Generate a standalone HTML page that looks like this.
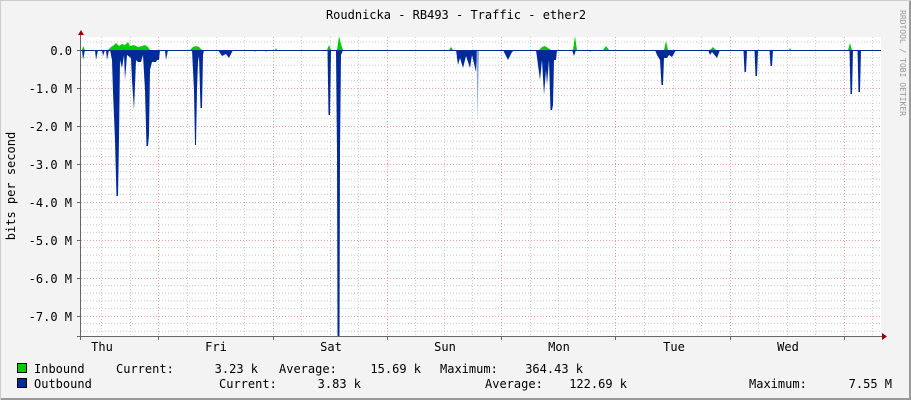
<!DOCTYPE html>
<html><head><meta charset="utf-8"><style>
html,body{margin:0;padding:0;background:#f3f3f3;}
svg{display:block;}
text{font-family:"DejaVu Sans Mono","Liberation Mono",monospace;font-size:12px;fill:#000;}
</style></head><body>
<svg width="911" height="400" xmlns="http://www.w3.org/2000/svg">
<rect x="0" y="0" width="911" height="400" fill="#f3f3f3"/>
<rect x="909" y="0" width="2" height="400" fill="#999"/>
<rect x="0" y="398" width="911" height="2" fill="#999"/>
<rect x="0" y="0" width="911" height="1" fill="#ccc"/>
<rect x="0" y="0" width="1" height="400" fill="#ccc"/>
<rect x="81" y="37" width="800" height="299" fill="#fff"/>
<g stroke="#ccc" stroke-width="1" stroke-dasharray="1,2">
<path d="M81 57.6H881M81 65.2H881M81 72.8H881M81 80.4H881
M81 95.6H881M81 103.2H881M81 110.8H881M81 118.4H881
M81 133.6H881M81 141.2H881M81 148.8H881M81 156.4H881
M81 171.6H881M81 179.2H881M81 186.8H881M81 194.4H881
M81 209.6H881M81 217.2H881M81 224.8H881M81 232.4H881
M81 247.6H881M81 255.2H881M81 262.8H881M81 270.4H881
M81 285.6H881M81 293.2H881M81 300.8H881M81 308.4H881
M81 323.6H881M81 331.2H881M81 42H881"/>
<path d="M101.5 37V336M130.5 37V336M187.5 37V336M216.5 37V336M244.5 37V336M301.5 37V336M330.5 37V336M358.5 37V336M415.5 37V336M444.5 37V336M472.5 37V336M530.5 37V336M558.5 37V336M587.5 37V336M644.5 37V336M673.5 37V336M701.5 37V336M758.5 37V336M787.5 37V336M815.5 37V336M872.5 37V336"/>
</g>
<g stroke="#e9a0a0" stroke-width="1" stroke-dasharray="1,2">
<path d="M81 88.5H881M81 126.5H881M81 164.5H881M81 202.5H881M81 240.5H881M81 278.5H881M81 316.5H881"/>
<path d="M158.5 37V336M273.5 37V336M387.5 37V336M501.5 37V336M615.5 37V336M730.5 37V336M844.5 37V336"/>
</g>
<g fill="#00cc00">
<path d="M82 50L83 46L85 50ZM108 50L111 47L114 45L116 43L119 46L122 44L125 45L128 42L130 46L134 45L138 47L142 46L145 45L148 47L150 50Z"/>
<path d="M190 50L193 47L196 46L199 47L202 50ZM275 50L276 48L277 50Z"/>
<path d="M327 50L329 45L331 50ZM337 50L339 36L341 44L343 50Z"/>
<path d="M449 50L451 47L453 50ZM539 50L542 47L545 46L548 48L551 50ZM573 50L575 36L577 50ZM603 50L606 46L609 50Z"/>
<path d="M664 50L666 41L668 50ZM710 50L713 47L716 50ZM789 50L790 48L791 50ZM848 50L850 43L852 50Z"/>
</g>
<g fill="#002a97">
<path d="M82 50L83 60L85 50ZM95 50L96 60L98 50ZM102 50L103 56L105 50ZM106 50L107 60L109 50Z
M110 50L112 60L113 92L115 140L116.5 196L118 196L119 140L120 60L122 68L124 55L125 80L127 55L131 58L132 80L134 110L136 60L138 62L141 62L143 55L145 90L146.5 146L148 146L149 135L150 70L152 62L156 62L157 60L159 60L160 50Z
M165 50L166 60L168 50ZM192 50L194 90L195 145L196 145L197 90L198 62L199 56L200.5 108L202 108L203 55L204 50ZM218 50L222 56L226 54L229 58L233 50Z"/>
<path d="M254 50L255 52L256 50ZM265 50L266 52L267 50ZM327.5 50L328.5 115L330 115L331 50ZM336 50L337 150L337.5 336L339.5 336L340 150L341 55L343 50Z"/>
<path d="M456 50L458 65L460 58L463 68L466 56L470 68L472 55L476 72L477 50Z"/>
<path d="M503 50L508 60L512 52L515 50ZM536 50L540 80L542 60L544 95L546 70L547 85L549 60L550.5 110L552 110L553 105L554 60L556 60L557 50ZM572 50L574 56L576 50ZM589 50L590 52L591 50Z"/>
<path d="M655 50L657 55L660 60L661.5 85L663 85L664 58L667 58L669 55L672 57L676 50ZM708 50L710 55L712 52L717 58L720 50ZM743.5 50L744.5 72L746 72L747 50ZM754.5 50L755.5 76L757 76L758 50ZM769.5 50L770.5 66L772 66L773 50ZM790 50L791 51L792 50ZM849.5 50L850.5 94L852 94L853 50ZM857.5 50L858.5 92L860 92L861 50Z"/>
</g>
<path d="M476.5 50L477.5 122L479 50Z" fill="#8fa6dc"/>
<line x1="81" y1="50.5" x2="881" y2="50.5" stroke="#002a97" stroke-width="1"/>
<line x1="80.5" y1="34" x2="80.5" y2="340" stroke="#666"/>
<line x1="77" y1="336.5" x2="884" y2="336.5" stroke="#666"/>
<path d="M78 35L81 30L84 35Z" fill="#900"/>
<path d="M882 333L887 336.5L882 340Z" fill="#900"/>
<g stroke="#666"><path d="M77 50.5H81M77 88.5H81M77 126.5H81M77 164.5H81M77 202.5H81M77 240.5H81M77 278.5H81M77 316.5H81"/>
<path d="M158.5 336V340M273.5 336V340M387.5 336V340M501.5 336V340M615.5 336V340M730.5 336V340M844.5 336V340"/></g>
<text x="456" y="19" text-anchor="middle">Roudnicka - RB493 - Traffic - ether2</text>
<g text-anchor="end">
<text x="72" y="55">0.0</text>
<text x="72" y="93">-1.0 M</text>
<text x="72" y="131">-2.0 M</text>
<text x="72" y="169">-3.0 M</text>
<text x="72" y="207">-4.0 M</text>
<text x="72" y="245">-5.0 M</text>
<text x="72" y="283">-6.0 M</text>
<text x="72" y="321">-7.0 M</text>
</g>
<text transform="translate(15,186) rotate(-90)" text-anchor="middle">bits per second</text>
<text transform="translate(900,10) rotate(90)" style="font-size:8px;fill:#999">RRDTOOL / TOBI OETIKER</text>
<g text-anchor="middle">
<text x="102" y="351">Thu</text><text x="216" y="351">Fri</text><text x="331" y="351">Sat</text>
<text x="445" y="351">Sun</text><text x="559" y="351">Mon</text><text x="674" y="351">Tue</text><text x="788" y="351">Wed</text>
</g>
<rect x="17.5" y="363.5" width="9" height="9" fill="#00cc00" stroke="#000"/>
<rect x="17.5" y="378.5" width="9" height="9" fill="#002a97" stroke="#000"/>
<text x="34" y="373">Inbound</text>
<text x="116" y="373">Current:</text>
<text x="258" y="373" text-anchor="end">3.23 k</text>
<text x="279" y="373">Average:</text>
<text x="421" y="373" text-anchor="end">15.69 k</text>
<text x="440" y="373">Maximum:</text>
<text x="583" y="373" text-anchor="end">364.43 k</text>
<text x="34" y="388">Outbound</text>
<text x="219" y="388">Current:</text>
<text x="361" y="388" text-anchor="end">3.83 k</text>
<text x="485" y="388">Average:</text>
<text x="627" y="388" text-anchor="end">122.69 k</text>
<text x="749" y="388">Maximum:</text>
<text x="892" y="388" text-anchor="end">7.55 M</text>
</svg>
</body></html>
